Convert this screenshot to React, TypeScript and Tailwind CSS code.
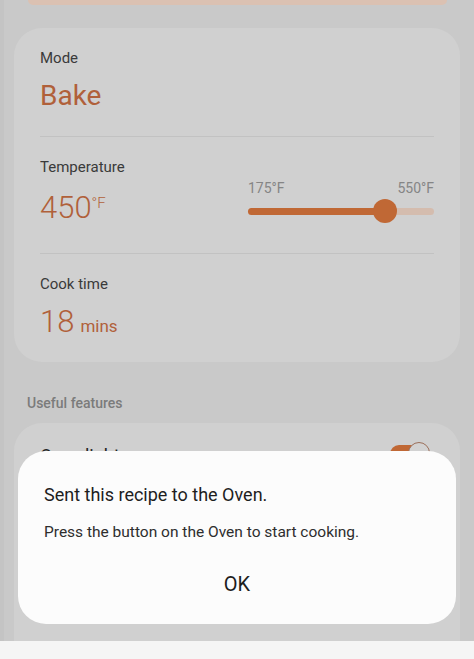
import React from "react";

export default function App() {
  const label = "text-[15px] leading-[20px] text-[#3a3a3a]";
  return (
    <div className="relative w-[474px] h-[659px] overflow-hidden bg-[#c9c9c9] font-['Roboto',sans-serif]">
      <div className="flex flex-col h-[641px] border-l-[4px] border-[#c4c4c4]">
        {/* peach card bottom */}
        <div className="ml-[24px] mr-[27px] h-[5px] bg-[#dbc1b2] rounded-b-[14px]" />

        {/* main card */}
        <div className="mt-[23px] ml-[10px] mr-[14px] rounded-[28px] bg-[#d0d0d0] px-[26px] pt-[20px] pb-[21px]">
          <div className={label}>Mode</div>
          <div className="mt-[11px] text-[28px] leading-[34px] text-[#b0603a]">Bake</div>
          <div className="mt-[23px] h-px bg-[#c2c2c2]" />

          <div className="flex items-start justify-between">
            <div className="pt-[20px]">
              <div className={label}>Temperature</div>
              <div className="mt-[12px] flex items-start h-[38px] text-[#b0603a]">
                <span className="text-[31px] leading-[38px] font-light">450</span>
                <span className="text-[15px] leading-[15px] mt-[7px] font-light">°F</span>
              </div>
            </div>
            <div className="pt-[42px] w-[186px]">
              <div className="flex justify-between text-[14px] leading-[18px] text-[#858585]">
                <span>175°F</span>
                <span>550°F</span>
              </div>
              <div className="relative mt-[2px] h-[24px] flex items-center">
                <div className="w-full h-[7px] rounded-full bg-[#d4bcae]" />
                <div className="absolute left-0 h-[7px] w-[137px] rounded-full bg-[#c06835]" />
                <div className="absolute left-[125px] w-[24px] h-[24px] rounded-full bg-[#c06835]" />
              </div>
            </div>
          </div>
          <div className="mt-[26px] h-px bg-[#c2c2c2]" />

          <div className={`mt-[20px] ${label}`}>Cook time</div>
          <div className="mt-[9px] flex items-baseline h-[38px] text-[#b0603a]">
            <span className="text-[31px] leading-[38px] font-light">18</span>
            <span className="ml-[6px] text-[17px]">mins</span>
          </div>
        </div>

        <div className="mt-[32px] ml-[23px] text-[14px] leading-[18px] font-medium text-[#7b7b7b]">
          Useful features
        </div>

        {/* second card */}
        <div className="mt-[11px] ml-[10px] mr-[14px] flex-1 rounded-t-[28px] bg-[#d0d0d0] px-[26px] pt-[22px] flex justify-between items-start">
          <div className="text-[18px] leading-[22px] text-[#222]">Oven light</div>
          <div className="relative -mt-[3px] mr-[4px] w-[40px] h-[22px]">
            <div className="absolute left-0 top-[3px] w-[38px] h-[18px] rounded-full bg-[#c06835]" />
            <div className="absolute right-0 top-0 w-[22px] h-[22px] rounded-full bg-[#d2d2d2] border-[1.5px] border-[#9c6f5a]" />
          </div>
        </div>
      </div>

      <div className="h-[18px] bg-[#f5f5f5]" />

      {/* dialog */}
      <div className="absolute left-[18px] top-[451px] w-[438px] h-[173px] rounded-[28px] bg-[#fcfcfc] px-[26px] pt-[32px]">
        <div className="text-[18px] leading-[24px] text-[#1e1e1e]">Sent this recipe to the Oven.</div>
        <div className="mt-[15px] text-[15.5px] leading-[20px] text-[#2e2e2e]">
          Press the button on the Oven to start cooking.
        </div>
        <div className="mt-[30px] text-center text-[20px] leading-[24px] text-[#1e1e1e]">OK</div>
      </div>
    </div>
  );
}
